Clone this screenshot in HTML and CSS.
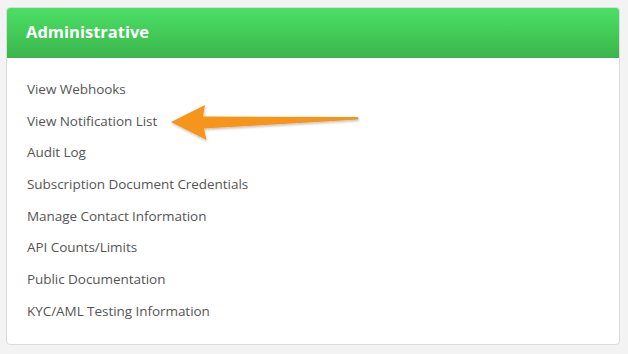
FILE: index.html
```html
<!DOCTYPE html>
<html>
<head>
<meta charset="utf-8">
<link rel="stylesheet" href="styles.css">
</head>
<body>
<div class="panel">
  <div class="panel-header">Administrative</div>
  <ul class="links">
    <li>View Webhooks</li>
    <li>View Notification List</li>
    <li>Audit Log</li>
    <li>Subscription Document Credentials</li>
    <li>Manage Contact Information</li>
    <li>API Counts/Limits</li>
    <li>Public Documentation</li>
    <li>KYC/AML Testing Information</li>
  </ul>
</div>
<svg class="arrow" width="628" height="354" viewBox="0 0 628 354">
  <defs>
    <filter id="sh" x="-10%" y="-50%" width="120%" height="200%">
      <feDropShadow dx="0.5" dy="1.5" stdDeviation="1.2" flood-color="#000" flood-opacity="0.25"/>
    </filter>
  </defs>
  <path d="M171 122 L205 105 L203 116.5 L358 117 L358.5 119.5 L204 128.5 L206.5 140 Z" fill="#f7941d" filter="url(#sh)"/>
</svg>
</body>
</html>
```
FILE: styles.css
```css
html, body {
  margin: 0;
  padding: 0;
}
body {
  background: #f3f3f3;
  width: 628px;
  height: 354px;
  position: relative;
  overflow: hidden;
  font-family: "Open Sans", "Liberation Sans", sans-serif;
}
.panel {
  position: absolute;
  left: 6px;
  top: 7px;
  width: 612px;
  height: 336px;
  background: #fff;
  border: 1px solid #dcdcdc;
  border-radius: 4px;
  overflow: hidden;
}
.panel-header {
  height: 51px;
  box-sizing: border-box;
  padding-left: 20px;
  padding-bottom: 2px;
  display: flex;
  align-items: center;
  background: linear-gradient(#4ce166, #3bb54c);
  color: #fff;
  font-weight: 700;
  font-size: 16.5px;
  letter-spacing: 0;
  margin: -1px -1px 0 -1px;
}
.links {
  list-style: none;
  margin: 0;
  padding: 16px 0 0 20px;
}
.links li {
  height: 31.7px;
  line-height: 31.7px;
  font-size: 13.5px;
  color: #555;
  letter-spacing: -0.05px;
}
.arrow {
  position: absolute;
  left: 0;
  top: 0;
  pointer-events: none;
}
```
